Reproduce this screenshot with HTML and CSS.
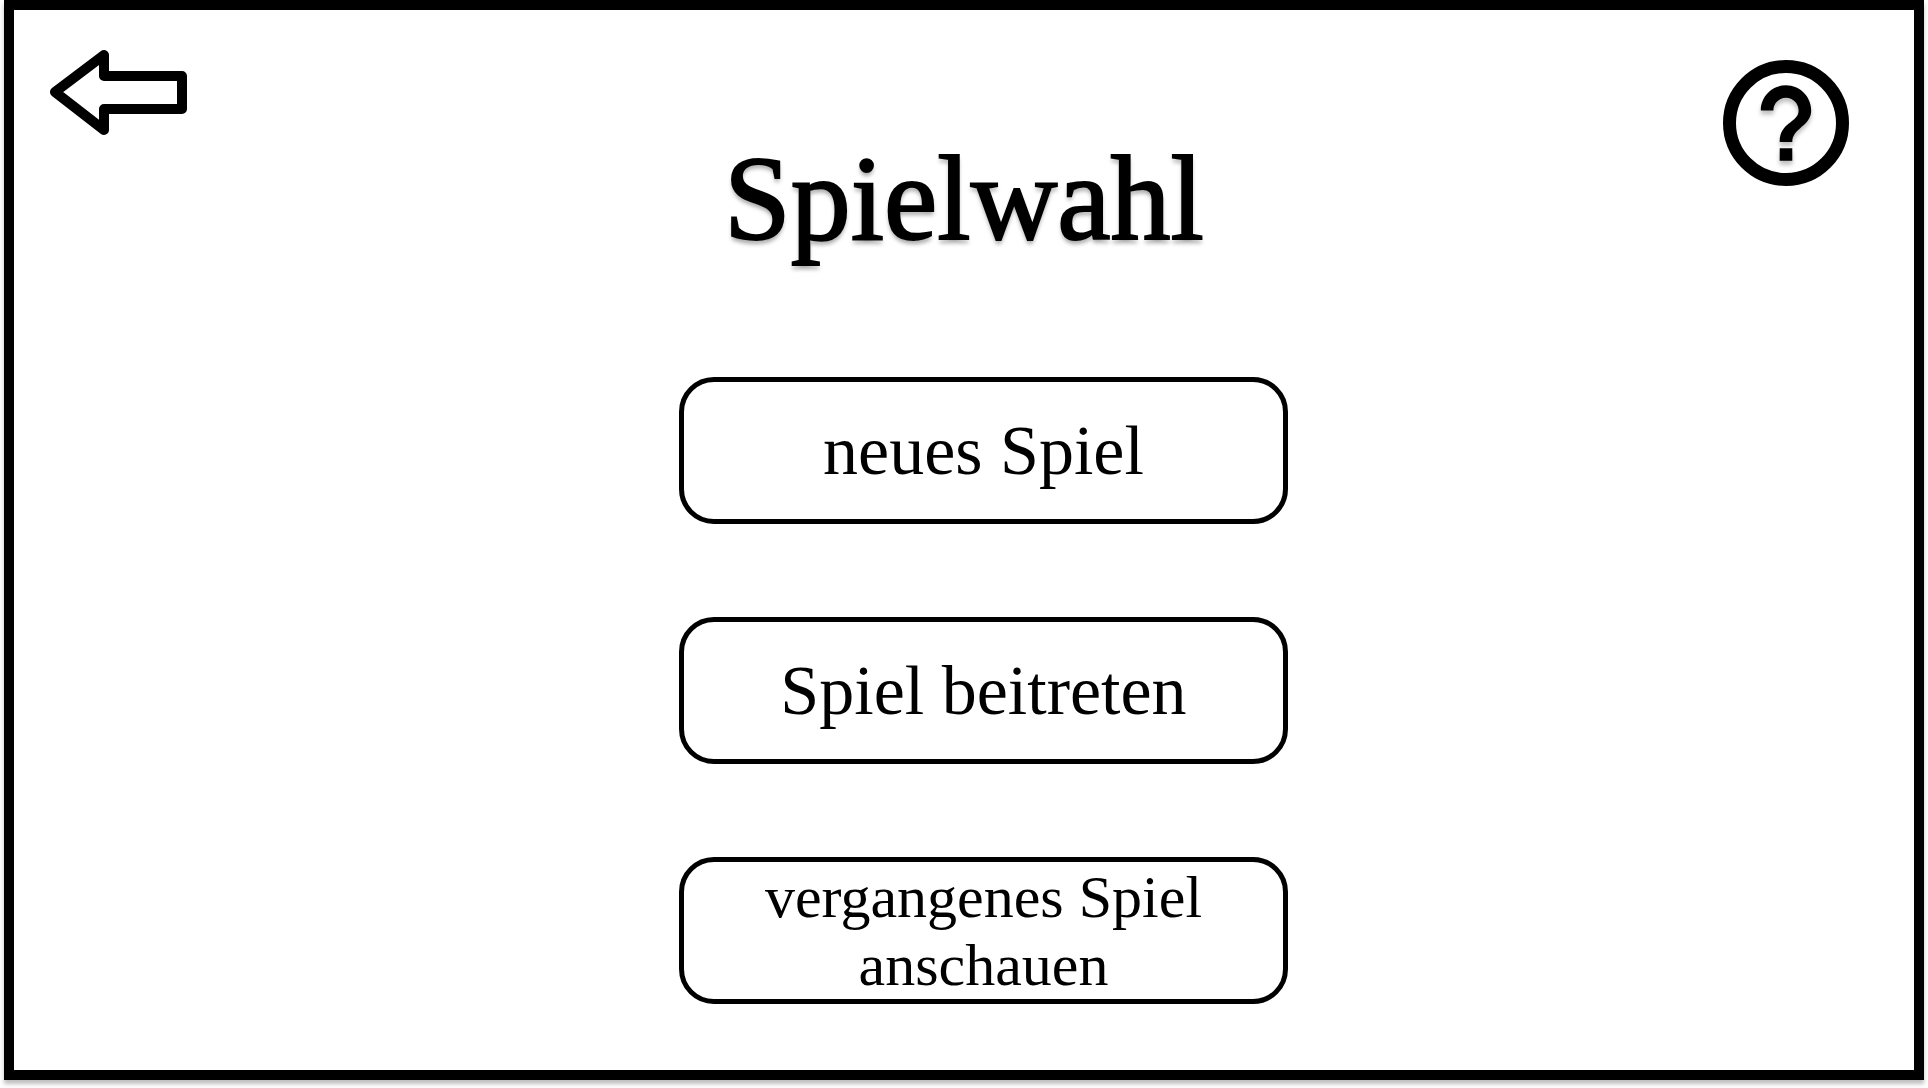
FILE: index.html
```html
<!DOCTYPE html>
<html lang="de">
<head>
  <meta charset="utf-8">
  <meta name="viewport" content="width=device-width, initial-scale=1">
  <title>Spielwahl</title>
  <link rel="stylesheet" href="styles.css">
</head>
<body>
  <div class="screen">
    <header class="header">
      <a class="back" href="#" aria-label="Zurück">
        <svg class="back-icon" viewBox="0 0 137 85" aria-hidden="true">
          <path d="M5 42 54 5V26H132V59H54V80Z"/>
        </svg>
      </a>
      <h1 class="title">Spielwahl</h1>
      <button class="help" type="button" aria-label="Hilfe">
        <svg class="help-icon" viewBox="0 0 126 126" aria-hidden="true">
          <circle class="help-ring" cx="63" cy="63" r="56.5"/>
          <g class="help-mark">
            <path transform="translate(-12.6 -12.6) scale(6.3)" d="M11 18h2v-2h-2v2zM12 6c-2.21 0-4 1.79-4 4h2c0-1.1.9-2 2-2s2 .9 2 2c0 2-3 1.75-3 5h2c0-2.25 3-2.5 3-5 0-2.21-1.79-4-4-4z"/>
          </g>
        </svg>
      </button>
    </header>
    <main class="menu">
      <button class="choice" type="button">neues Spiel</button>
      <button class="choice" type="button">Spiel beitreten</button>
      <button class="choice choice-long" type="button">vergangenes Spiel anschauen</button>
    </main>
  </div>
</body>
</html>
```

FILE: styles.css
```css
* {
  box-sizing: border-box;
}

body {
  margin: 0;
  background: #fff;
  color: #000;
  font-family: "Liberation Serif", "Times New Roman", serif;
}

.screen {
  display: flex;
  flex-direction: column;
  min-height: calc(100vh - 8px);
  margin: 0 4px 8px;
  border: 10px solid #000;
  box-shadow: 0 4px 4px rgba(0, 0, 0, 0.25);
}

.header {
  display: grid;
  grid-template-columns: 1fr auto 1fr;
  align-items: start;
  padding: 40px 36px 0;
}

.back {
  justify-self: start;
}

.back-icon {
  display: block;
  width: 137px;
  height: 85px;
  fill: none;
  stroke: #000;
  stroke-width: 10;
  stroke-linejoin: round;
}

.title {
  margin: 79px 0 0;
  font-size: 120px;
  font-weight: 400;
  line-height: 140px;
  -webkit-text-stroke: 2px #000;
  text-shadow: 0 4px 4px rgba(0, 0, 0, 0.35);
}

.help {
  justify-self: end;
  margin: 10px 29px 0 0;
  padding: 0;
  border: 0;
  background: none;
  cursor: pointer;
}

.help-icon {
  display: block;
  width: 126px;
  height: 126px;
}

.help-ring {
  fill: none;
  stroke: #000;
  stroke-width: 13;
}

.help-mark {
  filter: drop-shadow(0 4px 2px rgba(0, 0, 0, 0.25));
}

.menu {
  display: flex;
  flex-direction: column;
  align-items: center;
  gap: 93px;
  padding: 108px 0 40px 39px;
}

.choice {
  width: 609px;
  max-width: 100%;
  min-height: 147px;
  padding: 0;
  border: 5px solid #000;
  border-radius: 35px;
  background: #fff;
  color: #000;
  font-family: inherit;
  font-size: 70px;
  line-height: 80px;
  cursor: pointer;
}

.choice-long {
  font-size: 60px;
  line-height: 68px;
}
```
